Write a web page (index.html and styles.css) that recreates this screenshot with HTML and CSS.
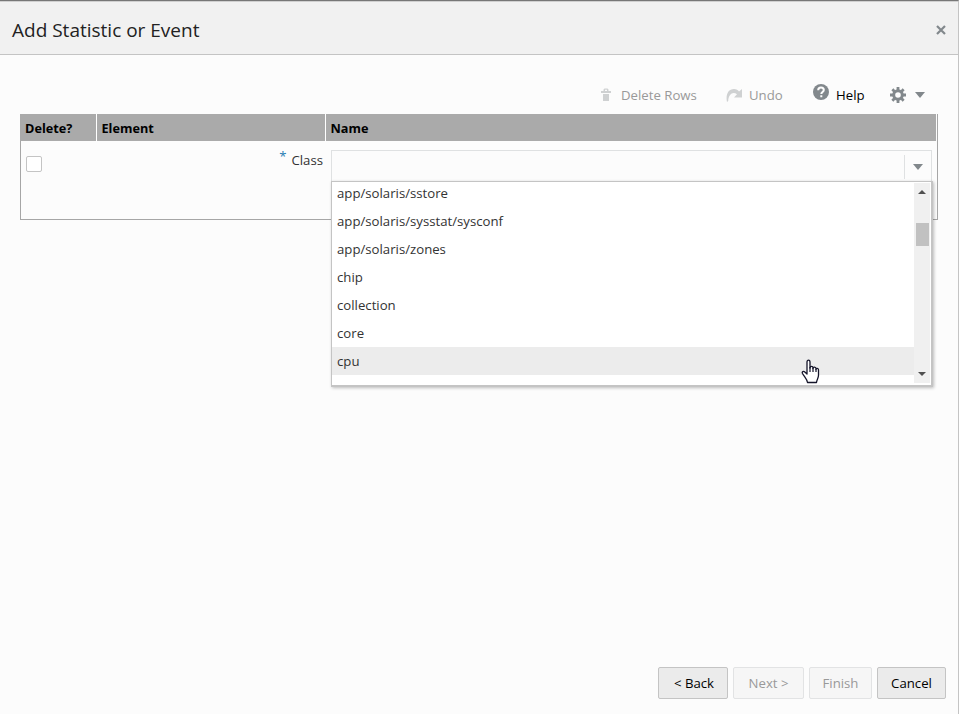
FILE: index.html
```html
<!DOCTYPE html>
<html lang="en">
<head>
<meta charset="utf-8">
<title>Add Statistic or Event</title>
<link rel="stylesheet" href="styles.css">
</head>
<body>
<section class="dialog">
  <header class="dialog-header">
    <h1>Add Statistic or Event</h1>
    <svg class="close" viewBox="0 0 10 10"><path d="M1 1 9 9M9 1 1 9"/></svg>
  </header>
  <main class="content">
    <div class="toolbar">
      <div class="tool delete disabled">
        <svg width="12" height="14" viewBox="0 0 12 14"><path d="M1 3h2.500V1.500L4.500 .5h3L8.500 1.500V3H11v2H1zM5 1.700V3h2V1.700zM3 6h6v7H3z" fill-rule="evenodd"/></svg>
        <span>Delete Rows</span>
      </div>
      <div class="tool undo disabled">
        <svg width="17" height="14" viewBox="0 0 17 14"><path d="M1 14C-.5 7 2 1 8 1c2.500 0 4 1 5 2.400L16 1v8.500H8L11 6.200C7 3 2.500 6 2.200 13z"/></svg>
        <span>Undo</span>
      </div>
      <div class="tool help">
        <svg width="16" height="16" viewBox="0 0 16 16"><circle cx="8" cy="8" r="8"/><path d="M5.200 6.200C5.200 2.500 10.800 2.700 10.800 6c0 2-2.500 2-2.500 4M8.300 11.300v2" fill="none" stroke="#fcfcfc" stroke-width="2"/></svg>
        <span>Help</span>
      </div>
      <div class="tool settings">
        <svg width="16" height="16" viewBox="0 0 16 16"><g fill="none" stroke="#82888c"><circle cx="8" cy="8" r="4.300" stroke-width="3"/><path d="M8 0v3M8 13v3M0 8h3M13 8h3M2.350 2.350l2.100 2.100M11.550 11.550l2.100 2.100M13.650 2.350l-2.100 2.100M4.450 11.550l-2.100 2.100" stroke-width="2.800"/></g></svg>
        <svg class="arrow" width="10" height="6" viewBox="0 0 10 6"><path d="M0 0h10L5 6z"/></svg>
      </div>
    </div>
    <div class="table">
      <div class="row head"><div>Delete?</div><div>Element</div><div>Name</div></div>
      <div class="row data">
        <div class="cell-check"><span class="checkbox"></span></div>
        <div class="cell-label"><span class="star">*</span><span>Class</span></div>
        <div class="cell-name">
          <div class="combo">
            <div class="combo-button"><svg width="10" height="6" viewBox="0 0 10 6"><path d="M0 0h10L5 6z"/></svg></div>
            <div class="menu">
              <ul>
                <li>app/solaris/sstore</li>
                <li>app/solaris/sysstat/sysconf</li>
                <li>app/solaris/zones</li>
                <li>chip</li>
                <li>collection</li>
                <li>core</li>
                <li class="active">cpu</li>
              </ul>
              <div class="scrollbar">
                <svg width="8" height="4" viewBox="0 0 8 4"><path d="M0 4h8L4 0z"/></svg>
                <i class="thumb"></i>
                <svg width="8" height="4" viewBox="0 0 8 4"><path d="M0 0h8L4 4z"/></svg>
              </div>
            </div>
          </div>
        </div>
      </div>
    </div>
  </main>
  <footer class="actions">
    <button class="back">&lt; Back</button>
    <button class="next" disabled>Next &gt;</button>
    <button class="finish" disabled>Finish</button>
    <button class="cancel">Cancel</button>
  </footer>
</section>
<svg class="cursor" width="20" height="25" viewBox="0 0 20 25"><path d="M6 15V3.200C6 .5 9 .5 9 3.200V9c0-2.300 3-2.300 3 0v.5c0-2 3-1.700 3 .2v.6c0-1.600 2.500-1.200 2.500.5v5.500c0 3-1.700 4-2 7.200h-9C6 20 3.500 18 1.500 14.500c-.9-1.700 1-2.700 2.300-1.500z" fill="#fff" stroke="#15152a" stroke-width="1.300" stroke-linejoin="round"/><path d="M9 8v5M12 9v4M15 10v3" stroke="#15152a" stroke-width="1.200"/></svg>
</body>
</html>
```
FILE: styles.css
```css
* { box-sizing: border-box; }

body {
  margin: 0;
  font: 13.2px/20px "Open Sans", "Noto Sans", sans-serif;
  color: #333;
}

.dialog {
  display: flex;
  flex-direction: column;
  height: 714px;
  background: #fcfcfc;
  border-top: 1px solid #777;
  border-right: 1px solid #c4c4c4;
}

.dialog-header {
  display: flex;
  align-items: center;
  justify-content: space-between;
  height: 54px;
  padding: 4px 12px 0;
  background: #f1f1f1;
  border-top: 1px solid #d0d0d0;
  border-bottom: 1px solid #c4c4c4;
}

h1 {
  margin: 0;
  font-size: 19px;
  font-weight: 400;
  line-height: 26px;
  color: #222;
}

.close { width: 10px; height: 10px; fill: none; stroke: #82888c; stroke-width: 2.2; }

.content { flex: 1; padding: 20px 20px 0; }

.toolbar { display: flex; justify-content: flex-end; height: 39px; padding-right: 13px; }
.tool { display: flex; align-items: center; height: 40px; color: #000; fill: #82888c; }
.tool span { white-space: nowrap; }
.disabled { color: #999; fill: #cfd1d2; }
.delete { gap: 9px; width: 126px; }
.undo { gap: 6px; width: 87px; }
.help { gap: 6px; width: 77px; }
.help svg { margin-top: -6px; }
.help span { margin-left: 1px; }
.settings { gap: 9px; width: 35px; }

.table { width: 918px; height: 106px; border: 1px solid #a6a6a6; border-top: 0; }
.row { display: grid; grid-template-columns: 75px 229px 1fr; }
.head { height: 27px; margin: 0 1px 0 -1px; grid-template-columns: 77px 229px 1fr; background: #aaa; color: #000; font-weight: 700; font-size: 12.7px; line-height: 28px; }
.head div { padding-left: 4.5px; border-right: 1px solid #fff; }
.head div:first-child { padding-left: 5px; }
.head div:last-child { border: 0; }
.cell-check { padding: 15px 5px; }
.checkbox { display: block; width: 16px; height: 16px; border: 1px solid #c4c4c4; border-radius: 2px; background: #fff; }
.cell-label { display: flex; justify-content: flex-end; gap: 5px; padding: 9px 1px 0 0; margin-right: 1px; }
.star { color: #267db3; margin-top: -4px; }
.cell-name { padding: 9px 0 0 6px; }

.combo { position: relative; display: flex; justify-content: flex-end; width: 601px; height: 32px; border: 1px solid #dfe1e2; border-bottom-color: #d0d0d0; }
.combo-button { display: flex; align-items: center; justify-content: center; width: 27px; height: 24px; margin-top: 4px; padding-right: 1px; border-left: 1px solid #dfe1e2; fill: #82888c; }

.menu {
  position: absolute;
  top: 30px;
  left: -1px;
  display: flex;
  width: 602px;
  height: 206px;
  overflow: hidden;
  background: #fff;
  border: 1px solid #c4c4c4;
  border-right-width: 2px;
  border-bottom-width: 2px;
  box-shadow: 1px 1px 3px rgba(0, 0, 0, .25);
}
ul { flex: 1; margin: -3px 0 0; padding: 0; list-style: none; }
li { height: 28px; padding-left: 5px; line-height: 28px; }
.active { background: #ececec; }
.scrollbar { display: flex; flex-direction: column; align-items: center; width: 16px; height: 200px; margin: 1px 1px 0 0; padding: 7px 0; background: #f0f0f0; fill: #505050; }
.scrollbar svg { flex: none; }
.thumb { width: 13px; height: 23px; margin: 29px 0 auto; background: #c1c1c1; }

.actions { display: flex; justify-content: flex-end; gap: 5px; height: 47px; padding-right: 12px; }
button { height: 32px; padding: 0; border: 1px solid #c4c4c4; border-radius: 2px; background: #ebebeb; color: #000; font: inherit; }
button:disabled { background: #f6f6f6; border-color: #e2e3e4; color: #999; }
.back { width: 70px; padding-left: 2px; }
.next { width: 71px; }
.finish { width: 63px; }
.cancel { width: 69px; }

.cursor { position: absolute; left: 801px; top: 359px; }
```
